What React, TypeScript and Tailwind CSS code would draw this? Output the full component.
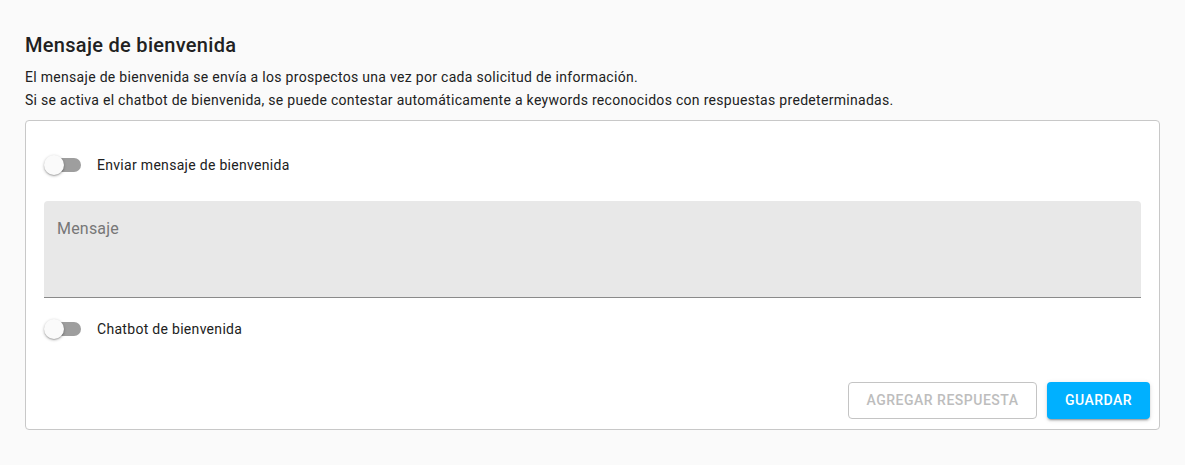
import { useState } from 'react';

function Toggle({ label }: { label: string }) {
    const [on, setOn] = useState(false);

    return (
        <div className="flex h-[38px] items-center">
            <button
                type="button"
                onClick={() => setOn(!on)}
                className="relative ml-[1px] h-[20px] w-[38px] shrink-0"
                aria-pressed={on}
            >
                <span
                    className={`absolute left-[2px] top-[3px] h-[14px] w-[34px] rounded-full ${on ? 'bg-[#80d8ff]' : 'bg-[#9e9e9e]'}`}
                />
                <span
                    className={`absolute top-0 h-[20px] w-[20px] rounded-full shadow-[0_1px_3px_rgba(0,0,0,0.3),0_1px_1px_rgba(0,0,0,0.14)] transition-all ${on ? 'left-[18px] bg-[#00b0ff]' : 'left-[-1px] bg-[#fafafa]'}`}
                />
            </button>
            <span className="ml-[14px] text-[14px] tracking-[0.3px] text-[#212121]">{label}</span>
        </div>
    );
}

export default function App() {
    return (
        <div
            className="min-h-[465px] bg-[#fafafa] px-[25px] pt-[31px]"
            style={{ fontFamily: "Roboto, 'Liberation Sans', sans-serif" }}
        >
            <h2 className="text-[20px] font-medium leading-[28px] tracking-[0.3px] text-[#212121]">
                Mensaje de bienvenida
            </h2>
            <div className="mt-[7px] text-[14px] leading-[23px] tracking-[0.3px] text-[#212121]">
                <p>El mensaje de bienvenida se envía a los prospectos una vez por cada solicitud de información.</p>
                <p>
                    Si se activa el chatbot de bienvenida, se puede contestar automáticamente a keywords reconocidos con
                    respuestas predeterminadas.
                </p>
            </div>

            <div className="mt-[8px] rounded-[4px] border border-[#c8c8c8] bg-white px-[18px] pb-[10px] pt-[25px]">
                <Toggle label="Enviar mensaje de bienvenida" />

                <div className="mt-[17px] h-[97px] rounded-t-[4px] border-b border-[#8a8a8a] bg-[#e8e8e8] px-[13px] pt-[16px]">
                    <span className="text-[16px] leading-[22px] tracking-[0.2px] text-[#777777]">Mensaje</span>
                </div>

                <div className="mt-[12px]">
                    <Toggle label="Chatbot de bienvenida" />
                </div>

                <div className="-mr-[9px] mt-[34px] flex justify-end gap-[10px]">
                    <button
                        type="button"
                        disabled
                        className="h-[37px] w-[189px] rounded-[4px] border border-[#c4c4c4] text-[14px] font-medium tracking-[0.5px] text-[#bdbdbd]"
                    >
                        AGREGAR RESPUESTA
                    </button>
                    <button
                        type="button"
                        className="h-[37px] w-[103px] rounded-[4px] bg-[#00b0ff] text-[14px] font-medium tracking-[0.5px] text-white shadow-[0_3px_1px_-2px_rgba(0,0,0,0.2),0_2px_2px_0_rgba(0,0,0,0.14),0_1px_5px_0_rgba(0,0,0,0.12)]"
                    >
                        GUARDAR
                    </button>
                </div>
            </div>
        </div>
    );
}
